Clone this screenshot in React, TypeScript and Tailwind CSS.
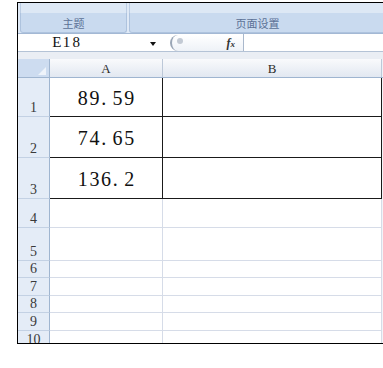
import React from "react";

type Row = { n: number; h: string; value?: string; boxed?: boolean };

const rows: Row[] = [
  { n: 1, h: "h-[39px]", value: "89.59", boxed: true },
  { n: 2, h: "h-[41px]", value: "74.65", boxed: true },
  { n: 3, h: "h-[41px]", value: "136.2", boxed: true },
  { n: 4, h: "h-[29px]" },
  { n: 5, h: "h-[33px]" },
  { n: 6, h: "h-[17px]" },
  { n: 7, h: "h-[18px]" },
  { n: 8, h: "h-[17px]" },
  { n: 9, h: "h-[18px]" },
  { n: 10, h: "h-[18px]" },
];

const serif = "font-['Liberation_Serif',serif]";
const cjk = "font-['Noto_Sans_CJK_SC','Noto_Sans',sans-serif]";

// SimSun-like half-width cells: every character takes the same width
function Cells({ text, cell }: { text: string; cell: string }) {
  return (
    <>
      {text.split("").map((ch, i) => (
        <span key={i} className={`inline-block ${cell} ${ch === "." ? "text-left pl-[1px]" : "text-center"}`}>
          {ch}
        </span>
      ))}
    </>
  );
}

function RibbonGroup({ label, className }: { label: string; className: string }) {
  return (
    <div className={`flex flex-col h-full ${className}`}>
      <div className="h-[10px] bg-[#dde8f5] border-x border-[#bccde3]" />
      <div className="flex-1 flex items-center justify-center pt-[2px] bg-[#c9daef] border-x border-b border-[#aec3de] rounded-b-[3px]">
        <span className={`${cjk} text-[11px] leading-none text-[#5b7196]`}>{label}</span>
      </div>
    </div>
  );
}

function GridRow({ row }: { row: Row }) {
  const line = row.boxed ? "border-[#1a1a1a]" : "border-[#d6dce8]";
  return (
    <div className={`flex shrink-0 ${row.h}`}>
      <div className="w-[32px] shrink-0 flex items-end justify-center bg-[#e4ecf7] border-r border-b border-r-[#9fb5d0] border-b-[#c3d1e4]">
        <span className={`${serif} text-[14px] leading-[15px] text-[#3a3a3a] pb-[1px]`}>{row.n}</span>
      </div>
      <div className={`w-[113px] shrink-0 flex items-center justify-center border-r border-b ${line}`}>
        {row.value && (
          <span className={`${serif} text-[20px] leading-none text-[#111] whitespace-nowrap pt-[1px]`}>
            <Cells text={row.value} cell="w-[11.6px]" />
          </span>
        )}
      </div>
      <div className={`w-[219px] shrink-0 border-r border-b ${line}`} />
      <div className="w-[1px] shrink-0 bg-[#f2f4f8]" />
    </div>
  );
}

export default function App() {
  return (
    <div className="w-[383px] h-[368px] bg-white overflow-hidden pt-[2px] pl-[17px]">
      <div className="w-[366px] h-[342px] border-t border-l border-b border-black flex flex-col overflow-hidden">
        {/* ribbon */}
        <div className="h-[31px] shrink-0 flex bg-[#dfe9f6] border-b border-[#a3b8d4] pl-[2px] gap-[2px]">
          <RibbonGroup label="主题" className="w-[107px]" />
          <RibbonGroup label="页面设置" className="flex-1 -mr-[3px]" />
        </div>

        {/* formula bar */}
        <div className="h-[18px] shrink-0 flex items-center bg-white border-b border-[#b4c3d6]">
          <div className="w-[145px] shrink-0 flex items-center h-full">
            <span className={`${serif} text-[15px] leading-none text-[#111] pl-[34px] whitespace-nowrap`}>
              <Cells text="E18" cell="w-[9.7px]" />
            </span>
            <svg width="6" height="4" viewBox="0 0 6 4" className="ml-auto mr-[7px] mt-[2px]">
              <path d="M0 0 H6 L3 4 Z" fill="#111" />
            </svg>
          </div>
          <div className="w-[7px] shrink-0" />
          <div className="w-[73px] h-[16px] shrink-0 flex items-center rounded-l-full border-l-2 border-[#9aa6b6] bg-gradient-to-b from-white to-[#eef2f7]">
            <div className="w-[6px] h-[6px] rounded-full bg-[#c3cad4] ml-[5px] -mt-[4px]" />
            <span className={`ml-auto mr-[8px] ${serif} italic font-bold text-[12px] leading-none text-[#333]`}>
              f<span className="text-[9px]">x</span>
            </span>
          </div>
          <div className="w-[1px] h-full bg-[#a9b8cc]" />
          <div className="flex-1" />
        </div>

        {/* gap */}
        <div className="h-[7px] shrink-0 bg-[#eaeef4]" />

        {/* column headers */}
        <div className="h-[18px] shrink-0 flex box-content border-b border-[#9fb5d0]">
          <div className="w-[32px] shrink-0 bg-[#cddcf0] border-r border-[#9fb5d0] flex items-end justify-end pr-[3px] pb-[2px]">
            <svg width="8" height="8" viewBox="0 0 8 8">
              <path d="M8 0 V8 H0 Z" fill="#eef3fa" />
            </svg>
          </div>
          <div className="w-[113px] shrink-0 flex items-end justify-center pb-[1px] bg-gradient-to-b from-[#f9fafc] to-[#e2e8f1] border-r border-[#bcc8d8]">
            <span className={`${serif} text-[13px] leading-[14px] text-[#2b2b2b]`}>A</span>
          </div>
          <div className="w-[219px] shrink-0 flex items-end justify-center pb-[1px] bg-gradient-to-b from-[#f9fafc] to-[#e2e8f1] border-r border-[#bcc8d8]">
            <span className={`${serif} text-[13px] leading-[14px] text-[#2b2b2b]`}>B</span>
          </div>
          <div className="flex-1 bg-[#eef1f6]" />
        </div>

        {/* grid */}
        <div className="flex-1 flex flex-col overflow-hidden">
          {rows.map((r) => (
            <GridRow key={r.n} row={r} />
          ))}
        </div>
      </div>
    </div>
  );
}
